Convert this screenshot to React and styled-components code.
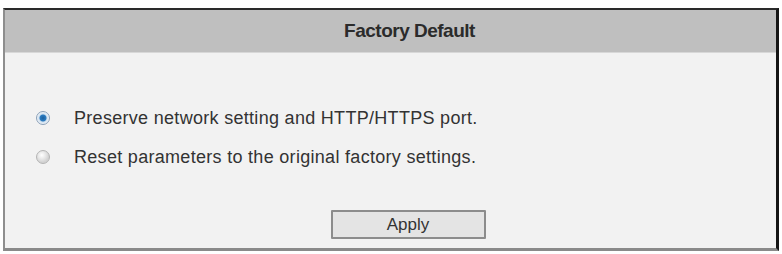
import React, {Component} from 'react'
import styled, {createGlobalStyle} from 'styled-components'

const GlobalStyle = createGlobalStyle`
  html, body {
    margin: 0;
    padding: 0;
    background: #ffffff;
  }
  body {
    font-family: 'Liberation Sans', Arial, sans-serif;
  }
`

const Page = styled.div`
  width: 782px;
  height: 254px;
  padding: 8px 3px 3px 3px;
  box-sizing: border-box;
`

const Panel = styled.section`
  height: 100%;
  box-sizing: border-box;
  display: flex;
  flex-direction: column;
  border-style: solid;
  border-width: 2px 3px 3px 2px;
  border-color: #2a2a2a #151515 #8a8a8a #8e8e8e;
  background: #f2f2f2;
`

const Header = styled.header`
  height: 42px;
  display: flex;
  align-items: center;
  justify-content: center;
  padding-left: 38px;
  background: #bfbfbf;
  color: #2b2b2b;
  font-size: 19px;
  font-weight: bold;
  letter-spacing: -0.5px;
  border-bottom: 1px solid #d8d8d8;
`

const Body = styled.div`
  flex: 1;
  display: flex;
  flex-direction: column;
  padding: 55px 0 0 31px;
`

const Option = styled.label`
  display: flex;
  align-items: center;
  height: 20px;
  margin-bottom: 19px;
  font-size: 18px;
  letter-spacing: 0.3px;
  color: #333333;
  cursor: pointer;
`

const Dot = styled.span`
  width: 14px;
  height: 14px;
  border-radius: 50%;
  box-sizing: border-box;
  margin-right: 24px;
  border: 1px solid ${p => (p.checked ? '#8aa0b8' : '#b4b4b4')};
  background: ${p =>
    p.checked
      ? 'radial-gradient(circle at 50% 50%, #1a5f9e 0, #2b7bc0 3px, #cfe0ef 4px, #eef3f8 6px)'
      : 'radial-gradient(circle at 40% 35%, #ffffff 0, #e6e6e6 4px, #d2d2d2 7px)'};
`

const Footer = styled.div`
  display: flex;
  justify-content: center;
  padding: 24px 0 0 4px;
`

const Button = styled.button`
  width: 155px;
  height: 29px;
  box-sizing: border-box;
  border: 2px solid #8c8c8c;
  border-radius: 1px;
  background: #e4e4e4;
  font-family: 'Liberation Sans', Arial, sans-serif;
  font-size: 17px;
  color: #333333;
  padding: 0;
  cursor: pointer;
`

const options = [
  'Preserve network setting and HTTP/HTTPS port.',
  'Reset parameters to the original factory settings.',
]

export default class App extends Component {
  constructor(props) {
    super(props)
    this.state = {selected: 0}
  }
  render() {
    return (
      <Page>
        <GlobalStyle />
        <Panel>
          <Header>Factory Default</Header>
          <Body>
            {options.map((text, i) => (
              <Option key={i} onClick={() => this.setState({selected: i})}>
                <Dot checked={this.state.selected === i} />
                {text}
              </Option>
            ))}
            <Footer>
              <Button>Apply</Button>
            </Footer>
          </Body>
        </Panel>
      </Page>
    )
  }
}
